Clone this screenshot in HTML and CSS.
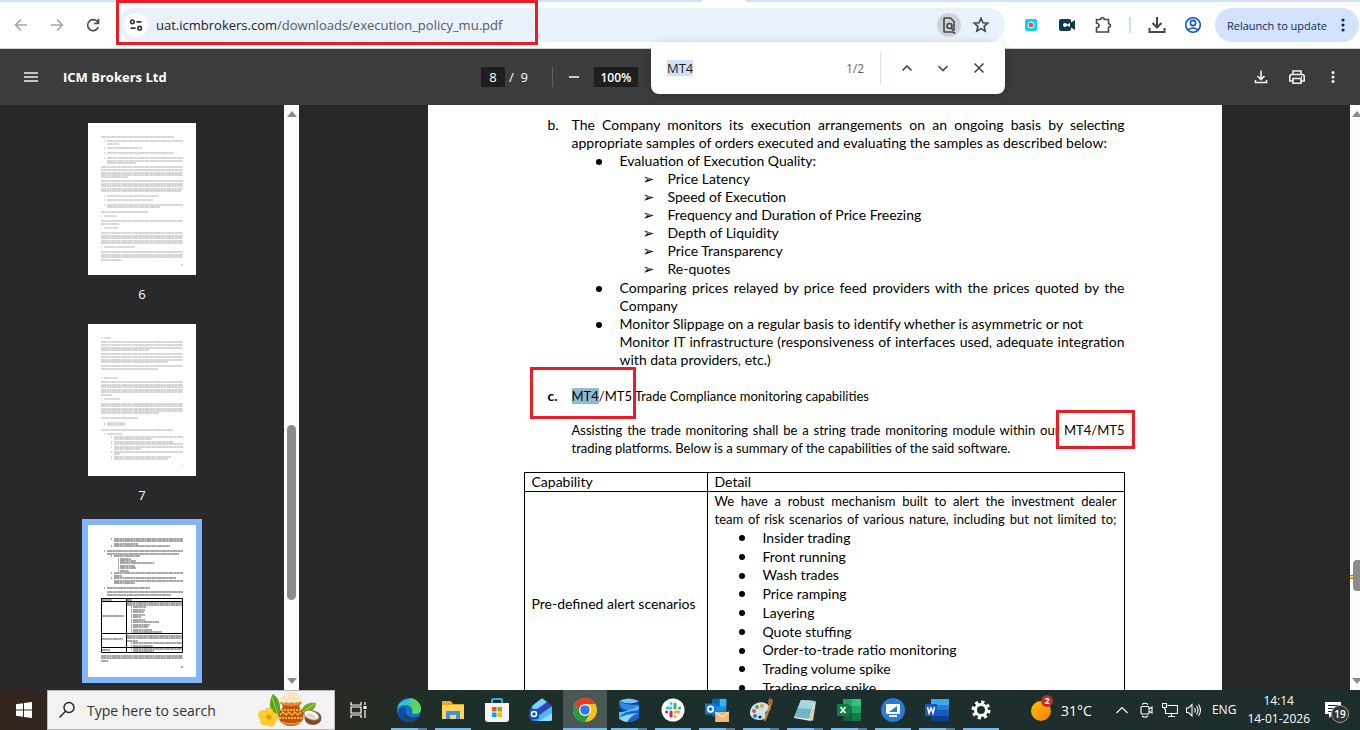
FILE: index.html
```html
<!DOCTYPE html>
<html lang="en">
<head>
<meta charset="utf-8">
<title>ICM Brokers Ltd</title>
<link rel="stylesheet" href="styles.css">
</head>
<body>
<header class="browser">
  <div class="tabstrip"><span class="active-tab"></span></div>
  <nav class="navbar">
    <div class="nav-buttons">
      <button class="icon-btn muted" aria-label="Back"><svg viewBox="0 0 20 20"><path d="M16 10H5M10 4.500L4.500 10l5.500 5.500"/></svg></button>
      <button class="icon-btn muted" aria-label="Forward"><svg viewBox="0 0 20 20"><path d="M4 10h11M10 4.500L15.500 10L10 15.500"/></svg></button>
      <button class="icon-btn" aria-label="Reload"><svg viewBox="0 0 20 20"><path d="M15.200 8A5.500 5.500 0 1 0 15.300 12M15.500 4v4.500H11"/></svg></button>
    </div>
    <div class="address">
      <button class="site-info" aria-label="Site information"><svg viewBox="0 0 20 20"><circle cx="6" cy="6.500" r="2"/><path d="M10.500 6.500H16M4 13.500h5.500"/><circle cx="14" cy="13.500" r="2"/></svg></button>
      <a class="url" href="#">uat.icmbrokers.com<span class="path">/downloads/execution_policy_mu.pdf</span></a>
      <button class="find-chip" aria-label="Find in page"><svg viewBox="0 0 20 20"><path d="M15 15.500V6.500L11.500 3H5.500Q5 3 5 3.500v13q0 .5.5.5h8.500L16 18.500"/><circle cx="10.500" cy="11" r="2.500"/><path d="M12.300 13L15 16"/></svg></button>
      <button class="icon-btn" aria-label="Bookmark"><svg viewBox="0 0 20 20"><path d="M10 3.200l1.900 4.500 4.900.4-3.700 3.200 1.100 4.800-4.200-2.500-4.200 2.500 1.100-4.800L3.200 8.100l4.900-.4z"/></svg></button>
    </div>
    <div class="extensions">
      <button class="icon-btn" aria-label="Screen recorder"><svg viewBox="0 0 20 20"><rect x="4" y="4" width="12" height="12" rx="2" fill="#00d5fa" stroke="none"/><circle cx="10" cy="10" r="3" fill="#f8503c" stroke="#fff" stroke-width="1"/></svg></button>
      <button class="icon-btn" aria-label="Video"><svg viewBox="0 0 20 20"><path d="M2 6q0-2 2-2h8q2 0 2 2v1.500L18 5v10l-4-2.500V14q0 2-2 2H4q-2 0-2-2z" fill="#12384d" stroke="none"/><circle cx="8" cy="10" r="2" fill="#fff" stroke="none"/><path d="M9 10l4-2v4z" fill="#fff" stroke="none"/></svg></button>
      <button class="icon-btn" aria-label="Extensions"><svg viewBox="0 0 20 20"><path d="M3.500 4.500h4.300q0-2 1.700-2t1.700 2h4.300v4.300q2 0 2 1.700t-2 1.700v4.800h-12v-4q2.500-.5 2.500-2.500t-2.500-2.500z"/></svg></button>
      <span class="divider"></span>
      <button class="icon-btn" aria-label="Downloads"><svg viewBox="0 0 20 20"><path d="M10 2v10M5.500 8L10 12.500 14.500 8M2.500 13v4h15v-4" stroke-width="2"/></svg></button>
      <button class="icon-btn profile" aria-label="Profile"><svg viewBox="0 0 20 20"><circle cx="10" cy="10" r="7.300"/><circle cx="10" cy="8" r="2.600"/><path d="M5 15q5-4 10 0"/></svg></button>
    </div>
    <button class="relaunch">Relaunch to update<svg viewBox="0 0 4 16"><circle cx="2" cy="3" r="1.600"/><circle cx="2" cy="8" r="1.600"/><circle cx="2" cy="13" r="1.600"/></svg></button>
  </nav>
  <form class="findbar">
    <div class="find-field"><input class="find-input" aria-label="Find" value="MT4"></div>
    <span class="count">1/2</span>
    <span class="find-divider"></span>
    <button type="button" class="icon-btn" aria-label="Previous"><svg viewBox="0 0 20 20"><path d="M5.500 12.500L10 8l4.500 4.500"/></svg></button>
    <button type="button" class="icon-btn" aria-label="Next"><svg viewBox="0 0 20 20"><path d="M5.500 8L10 12.500 14.500 8"/></svg></button>
    <button type="button" class="icon-btn" aria-label="Close"><svg viewBox="0 0 20 20"><path d="M5.500 5.500l9 9M14.500 5.500l-9 9"/></svg></button>
  </form>
  <span class="mark mark-url"></span>
</header>

<div class="pdfbar">
  <button class="icon-btn" aria-label="Menu"><svg viewBox="0 0 20 20"><path d="M3 6h14M3 10h14M3 14h14"/></svg></button>
  <h1 class="doc-title">ICM Brokers Ltd</h1>
  <div class="page-tools">
    <input class="page-no" aria-label="Page" value="8"><span class="page-total">/&nbsp; 9</span>
    <span class="divider"></span>
    <button class="icon-btn" aria-label="Zoom out"><svg viewBox="0 0 20 20"><path d="M5 10h10"/></svg></button>
    <input class="zoom" aria-label="Zoom level" value="100%">
  </div>
  <div class="file-tools">
    <button class="icon-btn" aria-label="Download"><svg viewBox="0 0 20 20"><path d="M10 3.500v8.500M6.500 9l3.500 3.500L13.500 9M4.500 13v2.500h11V13"/></svg></button>
    <button class="icon-btn" aria-label="Print"><svg viewBox="0 0 20 20"><path d="M6 7.500V4h8v3.500M6 14H2.800V9.500q0-2 2-2h10.400q2 0 2 2V14H14M6 11.500h8V16.200H6zM14 9.800h1"/></svg></button>
    <button class="icon-btn dots" aria-label="More"><svg viewBox="0 0 20 20"><circle cx="10" cy="5.500" r="1.500"/><circle cx="10" cy="10" r="1.500"/><circle cx="10" cy="14.500" r="1.500"/></svg></button>
  </div>
</div>

<div class="viewer">
  <aside class="thumbs">
    <figure class="thumb">
      <svg viewBox="0 0 108 152"><path class="ink" d="M13 14h73M16 18h1M19 18h76M19 21h12M16 25h1M19 25h35M16 30h1M19 30h67M16 35h1M19 35h76M19 38h76M19 40h29M13 44h82M13 47h82M13 50h82M13 52h82M13 54h27M13 58h82M13 61h82M13 63h82M13 66h82M13 68h80M16 73h1M19 73h51M16 77h1M19 77h46M16 82h1M19 82h76M19 84h53M13 89h47M13 98h82M13 101h18M13 110h82M13 113h82M13 115h82M13 118h82M13 120h82M13 129h82M13 132h82M13 134h82M13 137h21M93 142h2"/><path class="head" d="M13 93h1M16 93h13M13 105h1M16 105h14M13 124h1M16 124h31"/></svg>
      <figcaption>6</figcaption>
    </figure>
    <figure class="thumb">
      <svg viewBox="0 0 108 152"><path class="ink" d="M13 18h82M13 21h82M13 24h82M13 26h48M13 30h82M13 33h82M13 36h82M13 38h67M13 42h82M13 45h57M13 58h82M13 61h82M13 63h82M13 66h82M13 68h82M13 71h11M13 80h82M13 82h82M13 85h82M13 87h82M13 89h58M13 94h37M16 99h1M19 99h18M16 101h1M19 101h18M13 106h72M16 110h1M19 110h15M23 113h1M26 113h69M26 115h38M23 118h1M26 118h60M23 120h1M26 120h69M23 123h1M26 123h69M26 125h27M23 128h1M26 128h69M26 130h6M23 133h1M26 133h57M23 135h1M26 135h54M94 142h1"/><path class="head" d="M13 14h1M16 14h7M13 54h1M16 54h14M13 75h1M16 75h16"/></svg>
      <figcaption>7</figcaption>
    </figure>
    <figure class="thumb current">
      <svg viewBox="0 0 108 152"><path class="ink" d="M23 14h1M26 14h69M26 16h69M26 19h24M23 21h1M26 21h56M16 26h1M19 26h76M19 29h72M23 31h1M26 31h26M30 34h1M32 34h11M30 36h1M32 36h16M30 38h1M32 38h34M30 41h1M32 41h15M30 43h1M32 43h16M30 46h1M32 46h9M23 48h1M26 48h69M26 51h8M23 53h1M26 53h62M26 56h69M26 58h21M16 63h1M19 63h43M19 67h76M19 70h64M14 75h10M39 75h5M39 78h55M39 80h55M43 82h1M45 82h13M43 85h1M45 85h12M43 87h1M45 87h11M43 90h1M45 90h12M43 92h1M45 92h8M43 95h1M45 95h12M43 97h1M45 97h26M43 100h1M45 100h17M43 102h1M45 102h15M43 105h1M45 105h19M43 107h1M45 107h29M14 91h22M39 111h55M39 113h55M39 116h11M43 118h1M45 118h49M43 121h1M45 121h20M14 114h21M14 125h8M43 124h1M45 124h49M45 126h21M13 131h82M13 133h82M13 136h7M93 142h2"/><path class="grid" d="M13.500 73.500h81v54h-81zM38.500 73v54M13 76.500h81M13 108.500h81M13 122.500h81"/></svg>
    </figure>
  </aside>
  <div class="scroll thumbs-scroll">
    <svg class="arrow" viewBox="0 0 10 6"><path d="M5 0l5 6H0z"/></svg>
    <span class="handle"></span>
    <svg class="arrow" viewBox="0 0 10 6"><path d="M0 0h10L5 6z"/></svg>
  </div>
  <main class="stage">
    <article class="page">
      <ol class="outline">
        <li>
          <span class="num">b.</span>
          <div class="item">
            <p>The Company monitors its execution arrangements on an ongoing basis by selecting appropriate samples of orders executed and evaluating the samples as described below:</p>
            <ul class="dots-list">
              <li>Evaluation of Execution Quality:
                <ul class="arrow-list">
                  <li>Price Latency</li>
                  <li>Speed of Execution</li>
                  <li>Frequency and Duration of Price Freezing</li>
                  <li>Depth of Liquidity</li>
                  <li>Price Transparency</li>
                  <li>Re-quotes</li>
                </ul>
              </li>
              <li>Comparing prices relayed by price feed providers with the prices quoted by the Company</li>
              <li>Monitor Slippage on a regular basis to identify whether is asymmetric or not<br>Monitor IT infrastructure (responsiveness of interfaces used, adequate integration with data providers, etc.)</li>
            </ul>
          </div>
        </li>
        <li>
          <b class="num">c.</b>
          <div class="item compact">
            <p><mark>MT4</mark>/MT5 Trade Compliance monitoring capabilities</p>
            <p class="after">Assisting the trade monitoring shall be a string trade monitoring module within our MT4/MT5 trading platforms. Below is a summary of the capabilities of the said software.</p>
          </div>
        </li>
      </ol>
      <table class="caps">
        <thead><tr><th>Capability</th><th>Detail</th></tr></thead>
        <tbody><tr>
          <td>Pre-defined alert scenarios</td>
          <td class="detail">
            <p class="compact full">We have a robust mechanism built to alert the investment dealer team&nbsp;of risk scenarios of various nature, including but not limited to;</p>
            <ul class="dots-list">
              <li>Insider trading</li>
              <li>Front running</li>
              <li>Wash trades</li>
              <li>Price ramping</li>
              <li>Layering</li>
              <li>Quote stuffing</li>
              <li>Order-to-trade ratio monitoring</li>
              <li>Trading volume spike</li>
              <li>Trading price spike</li>
            </ul>
          </td>
        </tr></tbody>
      </table>
      <span class="mark mark-heading"></span>
      <span class="mark mark-platform"></span>
    </article>
  </main>
  <div class="scroll page-scroll">
    <svg class="arrow" viewBox="0 0 10 6"><path d="M5 0l5 6H0z"/></svg>
    <span class="hit"></span>
    <span class="handle"></span>
    <svg class="arrow" viewBox="0 0 10 6"><path d="M0 0h10L5 6z"/></svg>
  </div>
</div>

<footer class="taskbar">
  <button class="start" aria-label="Start"><svg viewBox="0 0 16 16"><path d="M0 2.300L7 1.200v6.300H0zM8 1l8-1v7.500H8zM0 8.500h7v6.300L0 13.700zM8 8.500h8V16l-8-1z" fill="#fff"/></svg></button>
  <label class="search">
    <svg class="lens" viewBox="0 0 18 18"><circle cx="11" cy="6.500" r="5"/><path d="M7.500 10.200L1.500 16.500"/></svg>
    <input placeholder="Type here to search">
    <svg class="festival" viewBox="0 0 64 36"><path d="M21 24C9 18 11 9 15 2c8 6 8 14 6 22z" fill="#5aa51d"/><path d="M14 5l6 18" stroke="#a5d04b"/><path d="M43 20c2-8 8-10 15-9-1 8-7 12-15 12z" fill="#6cae22"/><path d="M45 20l11-8" stroke="#b8d957"/><path d="M23 10q10 5 20 0l-2 5q6 5 4 12-3 7-12 7t-12-7q-2-7 4-12z" fill="#c8500f"/><ellipse cx="33" cy="11" rx="11" ry="3" fill="#e08a28"/><g fill="#fff0cd" stroke="#d8bd83" stroke-width=".4"><circle cx="26" cy="8" r="3"/><circle cx="31" cy="8" r="3"/><circle cx="36" cy="8" r="3"/><circle cx="40" cy="8" r="2.500"/><circle cx="29" cy="4.500" r="3"/><circle cx="34" cy="4" r="3"/><circle cx="38" cy="5" r="2.500"/><circle cx="32" cy="2" r="2"/></g><path d="M23 18h20M21 26h24" stroke="#ffd75c" stroke-width="1.500" stroke-dasharray="2 1"/><path d="M22 23l3-3 3 3 3-3 3 3 3-3 3 3 3-3" fill="none" stroke="#ffc638" stroke-width="1.200"/><path d="M24 30q9 4 18 0" fill="none" stroke="#ffc638"/><g fill="#ffd12c" stroke="#e8a512" stroke-width=".5"><circle cx="11" cy="20" r="4"/><circle cx="5" cy="23" r="4.500"/><circle cx="16" cy="25" r="4"/><circle cx="13" cy="30" r="4.200"/><circle cx="6.500" cy="29" r="4"/></g><circle cx="11" cy="25" r="2.500" fill="#f39312"/><ellipse cx="55" cy="26" rx="8.500" ry="7" fill="#7c4b31"/><ellipse cx="53.500" cy="23" rx="8" ry="4.500" transform="rotate(20 53 23)" fill="#fffdf7" stroke="#9a6747"/><ellipse cx="53" cy="24" rx="4.500" ry="2.200" transform="rotate(20 53 24)" fill="#ddd5ca"/></svg>
  </label>
  <button class="task-view" aria-label="Task view"><svg viewBox="0 0 18 16"><path d="M1 0v3h10V0M1 5h10v6H1zM1 16v-3h10v3M15 0v3M15 8v8" fill="none" stroke="#fff" stroke-width="1.200"/><path d="M13.500 4h3v3h-3z" fill="#fff"/></svg></button>
  <div class="apps">
    <button class="app run many" aria-label="Edge"><svg viewBox="0 0 24 24"><circle cx="12" cy="12" r="12" fill="#0e79c9"/><path d="M0 11C2 0 18-3 23 7c3 8-5 10-8 8 2-4-1-8-6-8S1 9 0 11z" fill="#36c1cc"/><path d="M12 0c8 0 13 7 12 12-1 5-8 4-9 3 2-4-1-7-4-8 5-1 4-5 1-7z" fill="#62d45b"/><path d="M9 10c-6 5-1 13 8 13-8 3-15-1-16-7 0-5 4-8 8-6z" fill="#0c4f9e"/><path d="M10 10q-4 7 4 9 4 1 8-1-2 4-6 5-7 0-9-5-1-5 3-8z" fill="#1b3f77"/></svg></button>
    <button class="app run" aria-label="File Explorer"><svg viewBox="0 0 24 24"><path d="M1 3h9l2 3h11v15H1z" fill="#e9a820"/><path d="M1 7h22v14H1z" fill="#ffd560"/><path d="M5 21v-8h14v8h-4v-4H9v4z" fill="#3b95dc"/></svg></button>
    <button class="app" aria-label="Store"><svg viewBox="0 0 24 24"><path d="M7 6V2q0-1 1-1h8q1 0 1 1v4" fill="none" stroke="#27b0e6" stroke-width="2"/><path d="M0 5h24v16q0 3-3 3H3q-3 0-3-3z" fill="#f5f5f5"/><path d="M7 9h4.500v4.500H7z" fill="#f25022"/><path d="M12.500 9H17v4.500h-4.500z" fill="#7fba00"/><path d="M7 14.500h4.500V19H7z" fill="#00a4ef"/><path d="M12.500 14.500H17V19h-4.500z" fill="#ffb900"/></svg></button>
    <button class="app" aria-label="Outlook (new)"><svg viewBox="0 0 24 24"><path d="M2 9L12 1q1-1 2 0l9 7v13q0 2-2 2H4q-2 0-2-2z" fill="#2b7de0"/><path d="M3 8l9-7q1-1 2 0l4 3-13 9z" fill="#78d3ff"/><path d="M8 17L23 8v13q0 2-2 2H8z" fill="#48b8f4"/><path d="M7 13L18 4l5 4-14 10z" fill="#3440b8"/><path d="M10 23l13-8v6q0 2-2 2z" fill="#8bdcff"/><rect y="11" width="10" height="10" rx="2" fill="#1254b5"/><circle cx="5" cy="16" r="2.500" fill="none" stroke="#fff" stroke-width="1.500"/></svg></button>
    <button class="app run active" aria-label="Chrome"><svg viewBox="0 0 24 24"><circle cx="12" cy="12" r="12" fill="#fbc116"/><path d="M1.600 6A12 12 0 0 1 22.400 6H12L7 15z" fill="#e33b2e"/><path d="M1.600 6A12 12 0 0 0 12 24l5.200-9L12 17.500 7 15z" fill="#249b48"/><circle cx="12" cy="12" r="6" fill="#fff"/><circle cx="12" cy="12" r="4.800" fill="#3478e5"/></svg></button>
    <button class="app run many" aria-label="Data Studio"><svg viewBox="0 0 24 24"><path d="M2 3v7q4 5 14 5 6-1 6-6V3q-3 4-10 4T2 3z" fill="#1550b4"/><path d="M2 3q9-5 20 0-8 5-20 0z" fill="#79c4ff"/><path d="M2 3q6 4 20 4-4 5-10 6Q3 11 2 3z" fill="#2a8de8"/><path d="M22 8q1 4-4 7l-16 5v-6q8 0 20-6z" fill="#59bff9"/><path d="M2 20q4-7 20-8v8q-4 4-10 4T2 20z" fill="#1b63cc"/><path d="M2 20q6-4 20-5-8 2-12 9-6-1-8-4z" fill="#8bd4ff"/></svg></button>
    <button class="app run" aria-label="Slack"><svg viewBox="0 0 24 24"><circle cx="12" cy="12" r="11.500" fill="#fff"/><g fill="none" stroke-width="3" stroke-linecap="round"><path d="M6 10h4M10 5.500h.1" stroke="#36c5f0"/><path d="M14 6v4M18.500 10h.1" stroke="#2eb67d"/><path d="M14 14h4M14 18.500h.1" stroke="#ecb22e"/><path d="M10 14v4M5.500 14h.1" stroke="#e01e5a"/></g></svg></button>
    <button class="app run many" aria-label="Outlook"><svg viewBox="0 0 26 26"><path d="M8 1h15v15H8z" fill="#1490df"/><path d="M8 1h8v8H8z" fill="#0a62b0"/><path d="M16 1h7v8h-7z" fill="#35b8f1"/><path d="M8 14h15v6H8z" fill="#1066b5"/><rect y="6" width="12" height="12" fill="#0f77d4"/><circle cx="6" cy="12" r="3" fill="none" stroke="#fff" stroke-width="1.800"/><path d="M11 15h15v11H11z" fill="#f0b878"/><path d="M11 15l7.500 6 7.500-6" fill="none" stroke="#fff"/></svg></button>
    <button class="app run many" aria-label="Paint"><svg viewBox="0 0 24 24"><path d="M1 14C2 5 12 2 18 6c5 4 4 7 0 7-3 1-1 4-1 6-2 5-17 4-16-5z" fill="#cfe3ef"/><circle cx="5" cy="13" r="2" fill="#de4b39"/><circle cx="8" cy="9" r="2" fill="#55a945"/><circle cx="13" cy="8" r="2" fill="#e9a126"/><circle cx="6" cy="18" r="2" fill="#3275cf"/><circle cx="11" cy="19" r="1.600" fill="#24323a"/><path d="M22 1l2 2-7 19q-1 2-2 0z" fill="#d7842a"/><path d="M20 0l4 2-2 5-3-1z" fill="#a8693a"/></svg></button>
    <button class="app run many" aria-label="Notepad"><svg viewBox="0 0 24 24"><path d="M8 2l14 1-4 20-17-3z" fill="#e9f1f1"/><path d="M8 2l13 1-5 18L1 19z" fill="#70b6c6"/><path d="M8 2l13 1-2 8L5 10z" fill="#a7d7df"/><path d="M22 3l1 1-3 19-4-2z" fill="#d9cfb0"/></svg></button>
    <button class="app run many" aria-label="Excel"><svg viewBox="0 0 24 24"><path d="M6 1h18v22H6z" fill="#21a366"/><path d="M15 1h9v7h-9z" fill="#33c481"/><path d="M6 8h9v7H6z" fill="#107c41"/><path d="M6 15h18v8H6z" fill="#185c37"/><path d="M15 15h9v8h-9z" fill="#107c41"/><rect y="6" width="12" height="12" fill="#107c41"/><path d="M3.500 9l5 6M8.500 9l-5 6" stroke="#fff" stroke-width="1.800"/></svg></button>
    <button class="app run" aria-label="Remote Desktop"><svg viewBox="0 0 24 24"><circle cx="12" cy="12" r="12" fill="#2b7bd5"/><rect x="5" y="6" width="14" height="10" rx="1" fill="#fff"/><path d="M8 14l8-6v6z" fill="#2b7bd5"/><path d="M8 18h8" stroke="#fff" stroke-width="2"/></svg></button>
    <button class="app run many" aria-label="Word"><svg viewBox="0 0 24 24"><path d="M6 1h18v6H6z" fill="#41a5ee"/><path d="M6 7h18v5H6z" fill="#2b7cd3"/><path d="M6 12h18v6H6z" fill="#185abd"/><path d="M6 18h18v5H6z" fill="#103f91"/><rect y="6" width="12" height="12" fill="#185abd"/><path d="M2.500 9l1.500 6 2-5 2 5 1.500-6" fill="none" stroke="#fff" stroke-width="1.500"/></svg></button>
    <button class="app run" aria-label="Settings"><svg viewBox="0 0 24 24"><circle cx="12" cy="12" r="5.500" fill="none" stroke="#fff" stroke-width="3"/><circle cx="12" cy="12" r="8" fill="none" stroke="#fff" stroke-width="3" stroke-dasharray="3.200 3.080"/></svg></button>
  </div>
  <div class="tray">
    <button class="weather"><svg viewBox="0 0 24 24"><defs><linearGradient id="sun" x2="1" y2="1"><stop stop-color="#ffc400"/><stop offset="1" stop-color="#f27a16"/></linearGradient></defs><circle cx="11" cy="13" r="10" fill="url(#sun)"/></svg><span class="alert">2</span>31°C</button>
    <svg class="tray-icon" viewBox="0 0 16 16"><path d="M2.500 11L8 5.500l5.500 5.500"/></svg>
    <svg class="tray-icon" viewBox="0 0 16 16"><path d="M4 4.500h6q1 0 1 1V11q0 1-1 1H4q-1 0-1-1V5.500q0-1 1-1zM11 7l3-2v6l-3-2M4 2.500q3-2.500 6 0M4 14q3 2.500 6 0"/></svg>
    <svg class="tray-icon" viewBox="0 0 16 16"><path d="M5.500 3.500h10v8H3.500V7M9.500 11.500v3M6 14.500h7M.5 1.500h4v4h-4zM2.500 5.500v2"/></svg>
    <svg class="tray-icon" viewBox="0 0 16 16"><path d="M.5 6v4.500h2L6 14V2.500L2.500 6zM8.500 6q1.500 2.200 0 4.500M10.500 4q3 4 0 8.500M12.500 2.500q4 5.500 0 11.500"/></svg>
    <span class="lang">ENG</span>
    <time class="clock">14:14<br>14-01-2026</time>
    <button class="notes" aria-label="Notifications"><svg viewBox="0 0 18 18"><path d="M1 1h16v12H9l-4 4v-4H1z" fill="#fff"/><path d="M4 4.500h10M4 7.500h10M4 10.500h5" stroke="#1e2f2c"/></svg><span class="badge">19</span></button>
  </div>
</footer>
</body>
</html>
```
FILE: styles.css
```css
* { box-sizing: border-box; }
body {
  margin: 0;
  height: 100vh;
  display: flex;
  flex-direction: column;
  overflow: hidden;
  font-family: "Open Sans", sans-serif;
  font-size: 13px;
  color: #1f1f1f;
}
button { border: 0; padding: 0; background: none; font: inherit; color: inherit; }
input { border: 0; padding: 0; outline: 0; font: inherit; color: inherit; min-width: 0; }
ul, ol, p, figure { margin: 0; padding: 0; list-style: none; }
svg { display: block; }

.icon-btn { width: 20px; height: 20px; flex: none; color: #474747; }
.icon-btn svg { width: 20px; height: 20px; fill: none; stroke: currentColor; stroke-width: 1.600; }
.icon-btn.muted { color: #a5a5a5; }
.mark { position: absolute; border: 3px solid #ed1c24; }

/* browser chrome */
.browser { position: relative; z-index: 2; background: #fff; border-bottom: 1px solid #d0d0d0; }
.tabstrip { height: 2px; background: #d3e3fd; display: flex; justify-content: center; }
.active-tab { width: 44px; margin-left: 88px; background: #fff; }
.navbar { height: 46px; display: flex; align-items: center; padding: 0 1px 0 11px; }
.nav-buttons { display: flex; gap: 16px; margin-right: 15px; }
.address {
  flex: 1; height: 34px; display: flex; align-items: center;
  padding: 0 14px 0 6px; border-radius: 17px; background: #e9f1fa;
}
.site-info { width: 24px; height: 24px; border-radius: 50%; background: #fff; display: grid; place-items: center; }
.site-info svg { width: 18px; height: 18px; fill: none; stroke: #333; stroke-width: 1.800; }
.url { flex: 1; margin-left: 8px; color: #1f1f1f; text-decoration: none; }
.path { color: #5a5a5a; }
.find-chip { width: 24px; height: 24px; border-radius: 50%; background: #ced3da; display: grid; place-items: center; margin-right: 10px; }
.find-chip svg { width: 20px; height: 20px; fill: none; stroke: #474747; stroke-width: 1.600; }
.extensions { display: flex; align-items: center; gap: 16px; margin: 0 12px 0 16px; }
.extensions .divider { width: 2px; height: 16px; background: #c9defa; }
.profile { color: #0b57d0; }
.relaunch {
  width: 144px; height: 34px; padding: 0 14px 0 12px; border-radius: 17px; background: #d3e3fd; color: #0a2a5c;
  display: flex; align-items: center; justify-content: space-between; font-size: 11px; white-space: nowrap;
}
.relaunch svg { width: 4px; height: 16px; fill: #0a2a5c; }
.findbar {
  position: absolute; top: 42px; right: 355px; width: 354px; height: 52px;
  display: flex; align-items: center; gap: 16px; padding: 0 16px;
  border-radius: 8px; background: #fff; box-shadow: 0 2px 8px rgba(0, 0, 0, .2);
}
.find-field { flex: 1; }
.find-input { display: block; width: 26px; height: 16px; background: #cfe1fc; }
.count { color: #666; font-size: 12px; }
.find-divider { width: 1px; height: 32px; background: #d3e3fd; }
.mark-url { left: 116px; top: 0; width: 422px; height: 45px; }

/* pdf toolbar */
.pdfbar { height: 56px; flex: none; display: flex; align-items: center; padding: 0 17px 0 21px; background: #3c3c3c; color: #fff; }
.pdfbar .icon-btn { color: #f1f1f1; }
.doc-title { flex: 1; margin: 0 0 0 22px; font-size: 13px; font-weight: 700; }
.page-tools { width: 444px; display: flex; align-items: center; }
.page-no, .zoom { height: 20px; background: #1e1e1e; text-align: center; }
.page-no { width: 24px; }
.zoom { width: 44px; margin-left: 10px; font-size: 12px; font-weight: 600; }
.page-total { margin-left: 4px; }
.page-tools .divider { width: 1px; height: 20px; margin: 0 11px 0 24px; background: #606060; }
.file-tools { flex: 1; display: flex; justify-content: flex-end; gap: 16px; }
.dots svg { fill: #f1f1f1; stroke: none; }

/* viewer */
.viewer { flex: 1; min-height: 0; display: flex; background: #282828; }
.thumbs { width: 284px; overflow: hidden; padding-top: 18px; display: flex; flex-direction: column; align-items: center; background: #28292a; }
.thumb { flex: none; color: #fff; text-align: center; }
.thumb svg { width: 108px; height: 152px; background: #fff; fill: none; }
.thumb figcaption { height: 49px; line-height: 38px; }
.thumb.current { margin-top: -6px; border: 6px solid #84b5f7; }
.ink { stroke: #777; stroke-opacity: .6; stroke-dasharray: 5 .3 3 .3 2 .3; }
.head { stroke: #a9bdd8; }
.current .ink { stroke: #222; stroke-opacity: .8; }
.grid { stroke: #000; }
.scroll { display: flex; flex-direction: column; align-items: center; background: #fcfcfc; padding: 6px 0; }
.arrow { width: 10px; height: 6px; fill: #8b8b8b; flex: none; }
.handle { background: #8b8b8b; border-radius: 5px; }
.thumbs-scroll { width: 15px; }
.thumbs-scroll .handle { width: 9px; height: 175px; margin: 308px 0 auto; }
.page-scroll { width: 10px; position: relative; overflow: hidden; align-items: flex-end; }
.page-scroll .arrow { margin-right: -2px; }
.page-scroll .handle { width: 7px; height: 31px; margin: 443px 0 auto; border-radius: 4px 0 0 4px; }
.hit { position: absolute; left: 0; top: 470px; width: 3px; height: 4px; background: #ffdf3f; border: solid #c8671a; border-width: 1px 0; }
.stage { flex: 1; overflow: hidden; display: flex; justify-content: center; }
.page {
  position: relative; width: 794px; flex: none; padding: 11px 97px 0 96px; background: #fff; color: #000;
  font-family: Lato, sans-serif; font-size: 14px; line-height: 18px; text-align: justify;
}
.outline { padding-left: 24px; display: flex; flex-direction: column; gap: 18px; }
.outline > li { display: flex; }
.num { width: 24px; flex: none; }
.item { flex: 1; }
.after { margin-top: 16px; }
.compact { font-size: 13px; }
.full { text-align-last: justify; }
.dots-list { padding-left: 48px; }
.dots-list > li { position: relative; }
.dots-list > li::before { content: ""; position: absolute; left: -24px; top: 7px; width: 6px; height: 6px; border-radius: 50%; background: #000; }
.arrow-list { padding: 0 0 1px 48px; }
.arrow-list > li { position: relative; }
.arrow-list > li::before { content: "➢"; position: absolute; left: -25px; font-family: "DejaVu Sans", sans-serif; font-size: 14px; }
mark { background: #8fbcd4; color: #000; }
.caps { width: 601px; margin-top: 15px; border-collapse: collapse; table-layout: fixed; }
.caps th, .caps td { border: 1px solid #000; padding: 0 7px; text-align: left; font-weight: 400; }
.caps th:first-child { width: 183px; }
.caps tbody tr { height: 224px; }
.caps .detail { vertical-align: top; text-align: justify; }
.caps .dots-list li { line-height: 19px; }
.caps .dots-list li:nth-child(4n+3) { line-height: 18px; }
.mark-heading { left: 102px; top: 262px; width: 106px; height: 52px; }
.mark-platform { left: 628px; top: 305px; width: 79px; height: 39px; }

/* taskbar */
.taskbar { position: relative; z-index: 1; height: 40px; flex: none; display: flex; align-items: center; background: linear-gradient(90deg, #33261f, #292821 24%, #1d2f2a 34%, #1c2d2d); color: #fff; }
.start { width: 47px; height: 40px; display: grid; place-items: center; }
.start svg { width: 16px; height: 16px; }
.search { width: 288px; height: 40px; display: flex; align-items: center; padding: 0 12px 0 10px; background: #f2f2f2; border: 1px solid #b8b8b8; }
.lens { width: 18px; height: 18px; fill: none; stroke: #222; stroke-width: 1.400; }
.search input { flex: 1; margin-left: 11px; background: none; font-size: 14px; }
.search input::placeholder { color: #333; opacity: 1; }
.festival { width: 64px; height: 36px; fill: none; }
.task-view { width: 47px; margin-right: 5px; display: grid; place-items: center; }
.task-view svg { width: 18px; height: 16px; }
.apps { display: flex; }
.app { width: 44px; height: 40px; padding: 0 4px; display: grid; place-items: center; position: relative; }
.app svg { width: 24px; height: 24px; }
.app.run::after { content: ""; position: absolute; left: 4px; right: 4px; bottom: 0; height: 2px; background: #76b9ed; }
.app.many::after { background: linear-gradient(90deg, #76b9ed 75%, #527f9f 75%); }
.app.active { background: #4a5855; }
.app.active::after { left: 0; right: 0; }
.tray { flex: 1; display: flex; align-items: center; justify-content: flex-end; padding-right: 10px; }
.weather { position: relative; display: flex; align-items: center; gap: 7px; margin-right: 22px; font-size: 14px; }
.weather svg { width: 24px; height: 24px; }
.alert { position: absolute; left: 11px; top: -3px; width: 12px; height: 12px; border-radius: 50%; background: #c42b1c; font-size: 9px; line-height: 12px; font-weight: 700; text-align: center; }
.tray-icon { width: 16px; height: 16px; margin-right: 8px; fill: none; stroke: #fff; stroke-width: 1.100; }
.lang, .clock { font-size: 12px; line-height: 18px; }
.lang { margin-left: 2px; }
.clock { margin: 0 14px 0 11px; text-align: center; }
.notes { position: relative; width: 26px; height: 24px; }
.notes svg { width: 18px; height: 18px; }
.badge { position: absolute; left: 7px; top: 7px; width: 18px; height: 18px; border: 1px solid #999; border-radius: 50%; background: #333; font-size: 10px; line-height: 16px; font-weight: 600; text-align: center; }
```
